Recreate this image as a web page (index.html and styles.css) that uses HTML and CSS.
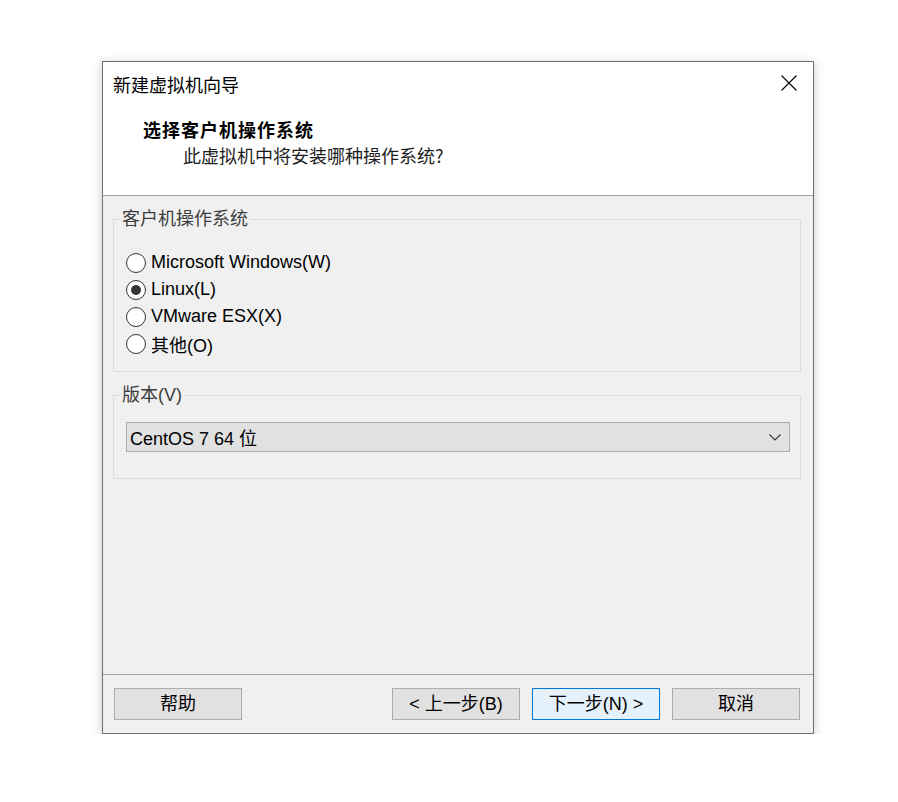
FILE: index.html
```html
<!DOCTYPE html>
<html lang="zh-CN">
<head>
<meta charset="utf-8">
<title>新建虚拟机向导</title>
<link rel="stylesheet" href="styles.css">
</head>
<body>
<div class="stage">
  <div class="dialog">
    <div class="header">
      <div class="title-row">
        <span class="title">新建虚拟机向导</span>
        <svg class="close" width="16" height="16" viewBox="0 0 16 16"><path d="M0.5 0.5L15.5 15.5M15.5 0.5L0.5 15.5" stroke="#000" stroke-width="1.1" fill="none"/></svg>
      </div>
      <div class="heading">选择客户机操作系统</div>
      <div class="subtitle">此虚拟机中将安装哪种操作系统?</div>
    </div>
    <div class="content">
      <fieldset class="group group-os">
        <legend>客户机操作系统</legend>
        <div class="radio-row"><span class="radio"></span><span class="radio-label">Microsoft Windows(W)</span></div>
        <div class="radio-row"><span class="radio checked"></span><span class="radio-label">Linux(L)</span></div>
        <div class="radio-row"><span class="radio"></span><span class="radio-label">VMware ESX(X)</span></div>
        <div class="radio-row"><span class="radio"></span><span class="radio-label">其他(O)</span></div>
      </fieldset>
      <fieldset class="group group-ver">
        <legend>版本(V)</legend>
        <div class="select">
          <span class="select-text">CentOS 7 64 位</span>
          <svg class="chevron" width="12" height="7" viewBox="0 0 12 7"><path d="M0.5 0.5L6 6L11.5 0.5" stroke="#333" stroke-width="1.1" fill="none"/></svg>
        </div>
      </fieldset>
    </div>
    <div class="footer">
      <button class="btn">帮助</button>
      <div class="spacer"></div>
      <button class="btn">&lt; 上一步(B)</button>
      <button class="btn btn-default">下一步(N) &gt;</button>
      <button class="btn">取消</button>
    </div>
  </div>
</div>
</body>
</html>
```

FILE: styles.css
```css
html, body {
  margin: 0;
  padding: 0;
  background: #ffffff;
}
body {
  font-family: "Liberation Sans", "Noto Sans CJK SC", sans-serif;
  font-size: 18px;
  color: #000;
}
.stage {
  padding: 61px 0 0 102px;
}
.dialog {
  box-sizing: border-box;
  width: 712px;
  height: 673px;
  border: 1px solid #707070;
  box-shadow: 0 2px 10px rgba(0, 0, 0, 0.22);
  background: #f0f0f0;
  display: flex;
  flex-direction: column;
}
.header {
  box-sizing: border-box;
  height: 134px;
  background: #ffffff;
  border-bottom: 1px solid #a0a0a0;
  padding: 10px 16px 0 10px;
}
.title-row {
  display: flex;
  align-items: center;
  justify-content: space-between;
  height: 24px;
  line-height: 24px;
}
.title {
  font-family: "Noto Sans CJK SC", sans-serif;
  font-size: 18px;
  color: #000;
}
.close {
  display: block;
  margin-top: -2px;
}
.heading {
  margin-top: 20px;
  margin-left: 30px;
  font-family: "Noto Sans CJK SC", sans-serif;
  font-weight: bold;
  font-size: 18px;
  line-height: 26px;
  letter-spacing: 1px;
  color: #000;
}
.subtitle {
  margin-left: 70px;
  font-family: "Noto Sans CJK SC", sans-serif;
  font-size: 18px;
  line-height: 26px;
  color: #1e1e1e;
}
.content {
  flex: 1;
  padding: 0 12px 0 10px;
}
.group {
  margin: 11px 0 0 0;
  border: 1px solid #dcdcdc;
  padding: 0 0 0 12px;
  min-width: 0;
}
.group legend {
  margin-left: -6px;
  padding: 0 2px;
  font-size: 18px;
  line-height: 24px;
  height: 24px;
  color: #3c3c3c;
}
.group-os {
  padding-top: 18px;
  padding-bottom: 14px;
}
.radio-row {
  display: flex;
  align-items: center;
  height: 27px;
}
.radio {
  box-sizing: border-box;
  width: 20px;
  height: 20px;
  border: 1px solid #333333;
  border-radius: 50%;
  background: #ffffff;
  display: flex;
  align-items: center;
  justify-content: center;
  flex-shrink: 0;
}
.radio.checked::after {
  content: "";
  width: 10px;
  height: 10px;
  border-radius: 50%;
  background: #333333;
}
.radio-label {
  margin-left: 5px;
  font-size: 18px;
  color: #000;
}
.group-ver {
  padding-top: 15px;
  padding-bottom: 26px;
  padding-right: 10px;
}
.select {
  box-sizing: border-box;
  height: 30px;
  border: 1px solid #adadad;
  background: #e1e1e1;
  display: flex;
  align-items: center;
  justify-content: space-between;
  padding: 0 8px 0 3px;
}
.select-text {
  font-size: 18px;
  color: #000;
}
.chevron {
  display: block;
}
.footer {
  box-sizing: border-box;
  height: 59px;
  border-top: 1px solid #a0a0a0;
  display: flex;
  align-items: flex-start;
  padding: 13px 13px 0 11px;
  gap: 12px;
}
.spacer {
  flex: 1;
}
.btn {
  box-sizing: border-box;
  width: 128px;
  height: 32px;
  border: 1px solid #adadad;
  background: #e1e1e1;
  font-family: "Liberation Sans", "Noto Sans CJK SC", sans-serif;
  font-size: 18px;
  line-height: 26px;
  color: #000;
  padding: 0 0 1px 0;
  margin: 0;
}
.btn-default {
  border: 1px solid #0078d7;
  background: #e5f1fb;
}
```
